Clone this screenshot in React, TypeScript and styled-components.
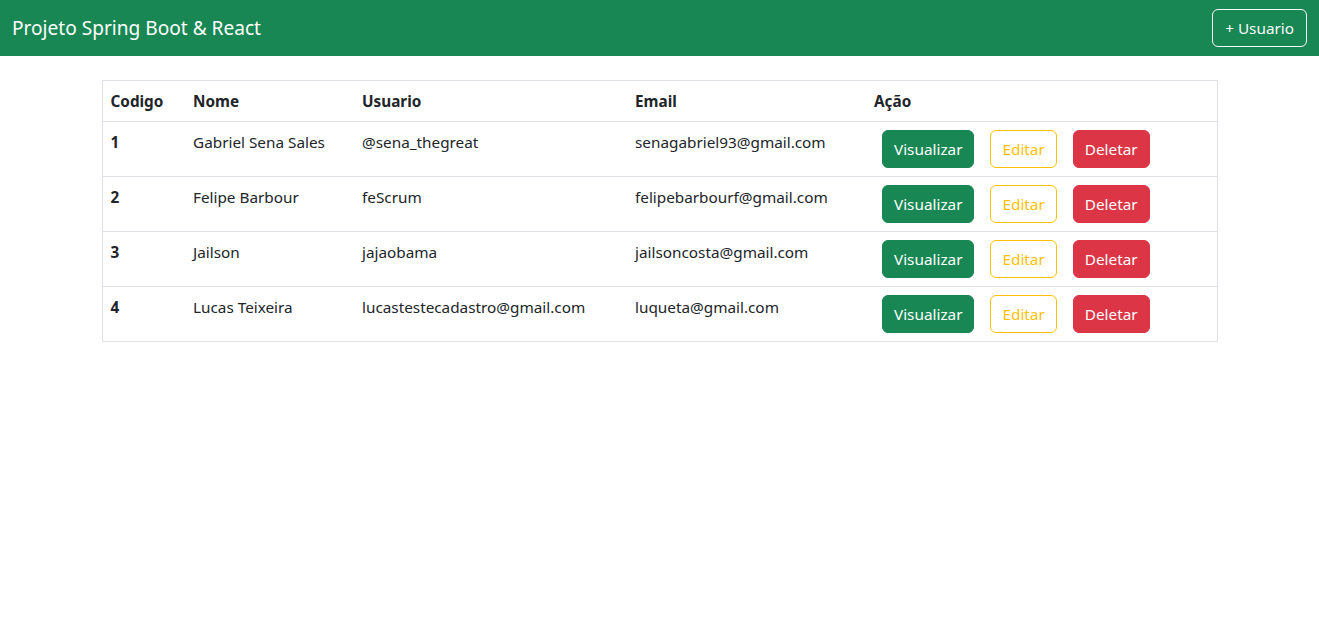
import React from "react";
import styled, { createGlobalStyle, css } from "styled-components";

const Global = createGlobalStyle`
  * { box-sizing: border-box; }
  body {
    margin: 0;
    font-family: "Noto Sans", "Open Sans", sans-serif;
    font-size: 15.3px;
    line-height: 24px;
    color: #212529;
    background: #fff;
  }
`;

const Navbar = styled.nav`
  height: 56px;
  background: #198754;
  display: flex;
  align-items: center;
  justify-content: space-between;
  padding: 0 12px;
`;

const Brand = styled.a`
  color: #fff;
  font-size: 19.1px;
  line-height: 30px;
  text-decoration: none;
`;

const Container = styled.main`
  max-width: 1140px;
  margin: 0 auto;
  padding: 24px 12px;
`;

const Table = styled.table`
  width: 100%;
  border-collapse: collapse;
  border: 1px solid #dee2e6;
  table-layout: fixed;
`;

const Th = styled.th<{ $w?: number }>`
  text-align: left;
  font-weight: 700;
  padding: 8px;
  border-bottom: 1px solid #dee2e6;
  vertical-align: bottom;
  ${(p) => p.$w && css`width: ${p.$w}px;`}
`;

const Td = styled.td<{ $bold?: boolean }>`
  padding: 8px;
  border-bottom: 1px solid #dee2e6;
  vertical-align: top;
  font-weight: ${(p) => (p.$bold ? 700 : 400)};
  white-space: nowrap;
`;

type Variant = "success" | "outlineWarning" | "danger" | "outlineLight";

const variants: Record<Variant, ReturnType<typeof css>> = {
  success: css`background: #198754; border-color: #198754; color: #fff;`,
  outlineWarning: css`background: transparent; border-color: #ffc107; color: #ffc107;`,
  danger: css`background: #dc3545; border-color: #dc3545; color: #fff;`,
  outlineLight: css`background: transparent; border-color: #f8f9fa; color: #f8f9fa;`,
};

const Button = styled.button<{ $variant: Variant; $mx?: boolean }>`
  display: inline-block;
  font-family: inherit;
  font-size: 15.3px;
  line-height: 24px;
  padding: 6px 12px;
  border: 1px solid;
  border-radius: 6px;
  cursor: pointer;
  ${(p) => variants[p.$variant]}
  ${(p) => p.$mx && css`margin: 0 8px; padding: 6px 11px;`}
`;

const users = [
  { id: 1, nome: "Gabriel Sena Sales", usuario: "@sena_thegreat", email: "senagabriel93@gmail.com" },
  { id: 2, nome: "Felipe Barbour", usuario: "feScrum", email: "felipebarbourf@gmail.com" },
  { id: 3, nome: "Jailson", usuario: "jajaobama", email: "jailsoncosta@gmail.com" },
  { id: 4, nome: "Lucas Teixeira", usuario: "lucastestecadastro@gmail.com", email: "luqueta@gmail.com" },
];

export default function App() {
  return (
    <>
      <Global />
      <Navbar>
        <Brand href="#">Projeto Spring Boot &amp; React</Brand>
        <Button $variant="outlineLight">+ Usuario</Button>
      </Navbar>
      <Container>
        <Table>
          <thead>
            <tr>
              <Th $w={83}>Codigo</Th>
              <Th $w={169}>Nome</Th>
              <Th $w={273}>Usuario</Th>
              <Th $w={239}>Email</Th>
              <Th>Ação</Th>
            </tr>
          </thead>
          <tbody>
            {users.map((u) => (
              <tr key={u.id}>
                <Td $bold>{u.id}</Td>
                <Td>{u.nome}</Td>
                <Td>{u.usuario}</Td>
                <Td>{u.email}</Td>
                <Td>
                  <Button $variant="success" $mx>Visualizar</Button>
                  <Button $variant="outlineWarning" $mx>Editar</Button>
                  <Button $variant="danger" $mx>Deletar</Button>
                </Td>
              </tr>
            ))}
          </tbody>
        </Table>
      </Container>
    </>
  );
}
